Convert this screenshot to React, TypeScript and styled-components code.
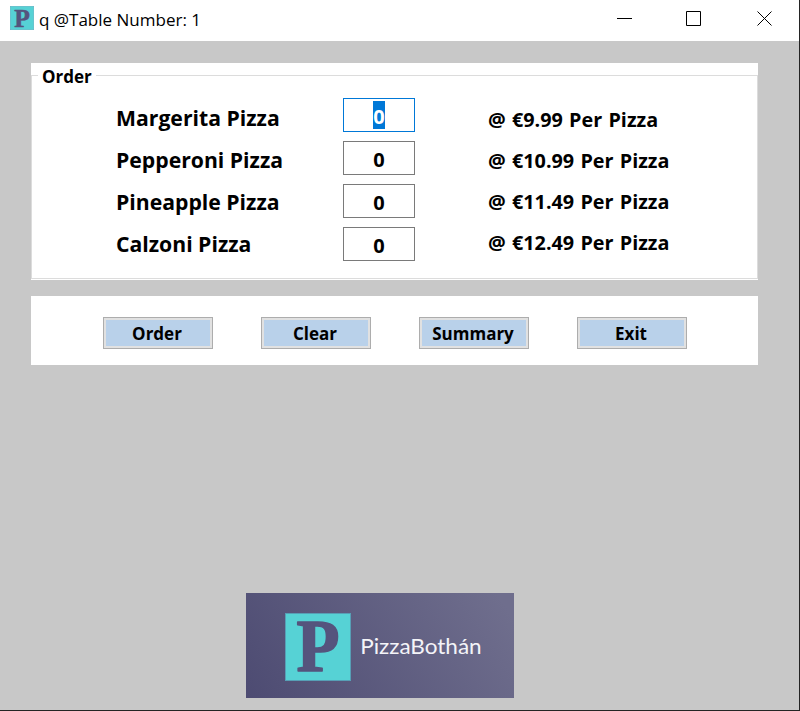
import React from 'react';
import styled, { createGlobalStyle } from 'styled-components';

const GlobalStyle = createGlobalStyle`
  * { box-sizing: border-box; }
  body { margin: 0; font-family: "Open Sans", "Noto Sans", sans-serif; color: #000; }
  svg { display: block; overflow: visible; }
`;

const Window = styled.div`
  width: 800px;
  height: 711px;
  display: flex;
  flex-direction: column;
  background: #c8c8c8;
  border-right: 1px solid #242424;
  border-bottom: 1px solid #242424;
`;

const TitleBar = styled.header`
  height: 41px;
  flex: none;
  display: flex;
  align-items: center;
  padding: 0 26px 5px 10px;
  background: #fff;
`;

const Title = styled.h1`
  margin: 0 auto 0 5px;
  padding-top: 3px;
  font-size: 17px;
  font-weight: 400;
  line-height: 24px;
  white-space: pre;
`;

const Body = styled.main`
  display: flex;
  flex-direction: column;
  padding: 22px 41px 0 31px;
`;

const GroupPanel = styled.section`
  height: 217px;
  padding: 3px 0 1px;
  background: #fff;
`;

const Group = styled.fieldset`
  height: 213px;
  margin: 0;
  padding: 0;
  border: 1px solid #dcdcdc;
`;

const Legend = styled.legend`
  height: 19px;
  margin-left: 6px;
  padding: 1px 4px 0;
  font-size: 17px;
  font-weight: 700;
  line-height: 20px;
`;

const Columns = styled.div`
  display: flex;
  align-items: flex-start;
  padding-top: 2px;
  font-weight: 700;
  white-space: nowrap;
`;

const Names = styled.div`
  width: 227px;
  margin-left: 84px;
  padding-top: 10px;
  display: grid;
  grid-auto-rows: 42px;
  font-size: 21.2px;
  line-height: 42px;
`;

const Quantities = styled.div`
  width: 72px;
  padding-top: 11px;
  display: grid;
  gap: 9px;
`;

const Quantity = styled.div<{ $focused?: boolean }>`
  height: 34px;
  display: flex;
  justify-content: center;
  align-items: flex-start;
  padding-top: 2px;
  border: 1px solid ${(p) => (p.$focused ? '#0078d7' : '#7a7a7a')};
  font-size: 20px;
  line-height: 32px;
`;

const Selection = styled.span`
  height: 28px;
  line-height: 32px;
  background: #0078d7;
  color: #fff;
`;

const Prices = styled.div`
  margin-left: 73px;
  padding-top: 12px;
  display: grid;
  grid-auto-rows: 41px;
  font-size: 19.8px;
  line-height: 41px;
  word-spacing: 1.1px;
`;

const Actions = styled.section`
  height: 69px;
  margin-top: 16px;
  display: flex;
  gap: 48px;
  padding: 21px 0 0 72px;
  background: #fff;
`;

const ActionButton = styled.button`
  width: 110px;
  height: 32px;
  padding: 2px 2px 0 0;
  border: 1px solid #adadad;
  background: #b9d1ea;
  box-shadow: inset 0 0 0 2px #e1e1e1;
  font: 700 17px/28px "Open Sans", "Noto Sans", sans-serif;
  color: #000;
`;

const Brand = styled.footer`
  width: 268px;
  height: 105px;
  margin: auto 0 12px 246px;
`;

const pizzas = [
  { name: 'Margerita Pizza', price: '9.99' },
  { name: 'Pepperoni Pizza', price: '10.99' },
  { name: 'Pineapple Pizza', price: '11.49' },
  { name: 'Calzoni Pizza', price: '12.49' },
];

const Mark = () => (
  <>
    <rect x="0.5" y="0.5" width="65" height="67" fill="#56d2d5" stroke="#579fb5" />
    <text
      x="11.5"
      y="58.2"
      textLength="43"
      lengthAdjust="spacingAndGlyphs"
      fontFamily="Liberation Serif, serif"
      fontWeight="700"
      fontSize="73.5"
      fill="#55547d"
      stroke="#55547d"
      strokeWidth="1.6"
      strokeLinejoin="round"
    >
      P
    </text>
  </>
);

export default function App() {
  return (
    <Window>
      <GlobalStyle />
      <TitleBar>
        <svg width="24" height="24" viewBox="0 0 66 68" preserveAspectRatio="none">
          <Mark />
        </svg>
        <Title>q @Table Number: 1</Title>
        <svg width="156" height="16" viewBox="0 0 156 16" fill="none" stroke="#000">
          <path d="M0 8.5H15M69.5 1.5H83.5V15.5H69.5ZM140.5 1.5L154.5 15.5M154.5 1.5L140.5 15.5" />
        </svg>
      </TitleBar>
      <Body>
        <GroupPanel>
          <Group>
            <Legend>Order</Legend>
            <Columns>
              <Names>
                {pizzas.map((p) => (
                  <span key={p.name}>{p.name}</span>
                ))}
              </Names>
              <Quantities>
                {pizzas.map((p, i) => (
                  <Quantity key={p.name} $focused={i === 0}>
                    {i === 0 ? <Selection>0</Selection> : '0'}
                  </Quantity>
                ))}
              </Quantities>
              <Prices>
                {pizzas.map((p) => (
                  <span key={p.name}>{`@ €${p.price} Per Pizza`}</span>
                ))}
              </Prices>
            </Columns>
          </Group>
        </GroupPanel>
        <Actions>
          {['Order', 'Clear', 'Summary', 'Exit'].map((label) => (
            <ActionButton key={label}>{label}</ActionButton>
          ))}
        </Actions>
      </Body>
      <Brand>
        <svg width="268" height="105">
          <defs>
            <linearGradient id="brandFill" x1="0" y1="105" x2="225" y2="-40" gradientUnits="userSpaceOnUse">
              <stop stopColor="#4d4b72" />
              <stop offset="1" stopColor="#6f6e8d" />
            </linearGradient>
          </defs>
          <rect width="268" height="105" fill="url(#brandFill)" />
          <g transform="translate(39 20)">
            <Mark />
          </g>
          <text x="114.2" y="61" textLength="121.5" lengthAdjust="spacingAndGlyphs" fontFamily="Lato, sans-serif" fontSize="21" fill="#f4f4f8">
            PizzaBothán
          </text>
        </svg>
      </Brand>
    </Window>
  );
}
